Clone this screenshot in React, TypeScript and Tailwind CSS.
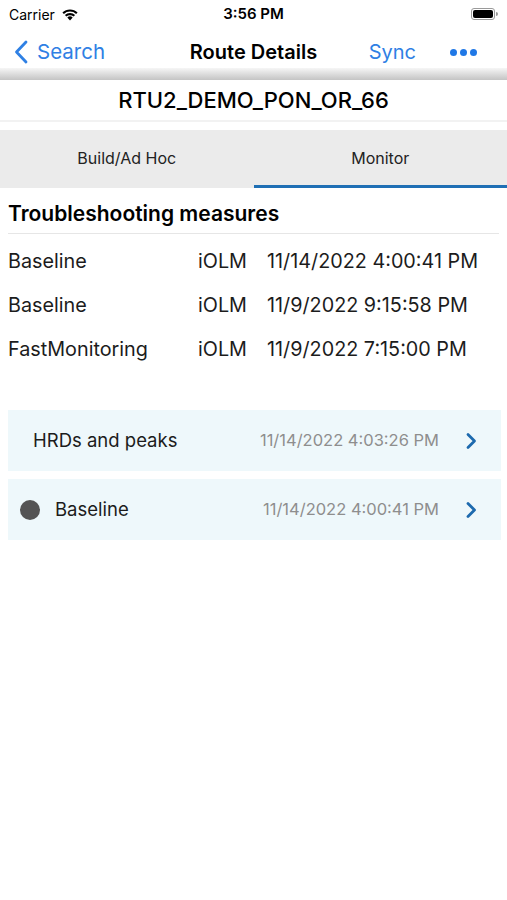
const measures = [
  { name: "Baseline", kind: "iOLM", date: "11/14/2022 4:00:41 PM" },
  { name: "Baseline", kind: "iOLM", date: "11/9/2022 9:15:58 PM" },
  { name: "FastMonitoring", kind: "iOLM", date: "11/9/2022 7:15:00 PM" },
];

const font = { fontFamily: "Inter, 'Liberation Sans', sans-serif" };

const StatusBar = () => (
  <div className="h-[28px] flex items-center justify-between px-[9px] text-black">
    <div className="flex items-center gap-[6px] w-[120px]">
      <span className="text-[14px]">Carrier</span>
      <svg width="18" height="13" viewBox="0 0 18 13">
        <path d="M9 12.5 L6.3 9.6 A3.8 3.8 0 0 1 11.7 9.6 Z" fill="#000" />
        <path d="M3.9 7.1 A7.3 7.3 0 0 1 14.1 7.1 L12.6 8.6 A5.2 5.2 0 0 0 5.4 8.6 Z" fill="#000" />
        <path d="M1.4 4.6 A10.8 10.8 0 0 1 16.6 4.6 L15.1 6.1 A8.7 8.7 0 0 0 2.9 6.1 Z" fill="#000" />
      </svg>
    </div>
    <span className="text-[15px] font-semibold">3:56 PM</span>
    <div className="w-[120px] flex justify-end">
      <div className="flex items-center">
        <div className="w-[24px] h-[12px] rounded-[3px] border border-[#9a9a9a] p-[1px]">
          <div className="w-full h-full rounded-[2px] bg-black" />
        </div>
        <div className="w-[2px] h-[4px] rounded-r-sm bg-[#9a9a9a] ml-[1px]" />
      </div>
    </div>
  </div>
);

const NavBar = () => (
  <div className="h-[40px] pt-[8px] flex items-center px-[14px]">
    <div className="flex items-center gap-[9px] w-[150px] text-[#2f80e4]">
      <svg width="14" height="24" viewBox="0 0 14 24">
        <path d="M12 2 L2.5 12 L12 22" fill="none" stroke="#2f80e4" strokeWidth="2.8" strokeLinecap="round" strokeLinejoin="round" />
      </svg>
      <span className="text-[20.5px]">Search</span>
    </div>
    <div className="flex-1 text-center text-[20px] font-semibold text-black">Route Details</div>
    <div className="w-[150px] flex items-center justify-end gap-[34px] pr-[16px]">
      <span className="text-[20px] text-[#2f80e4]">Sync</span>
      <div className="flex gap-[3px]">
        <span className="w-[7px] h-[7px] rounded-full bg-[#1f78e6]" />
        <span className="w-[7px] h-[7px] rounded-full bg-[#1f78e6]" />
        <span className="w-[7px] h-[7px] rounded-full bg-[#1f78e6]" />
      </div>
    </div>
  </div>
);

const EntryCard = ({ label, date, dot }: { label: string; date: string; dot?: boolean }) => (
  <div className="h-[61px] bg-[#eef8fb] flex items-center pl-[12px] pr-[24px]">
    {dot ? (
      <div className="w-[20px] h-[20px] rounded-full bg-[#545454] mr-[15px]" />
    ) : (
      <div className="w-[13px]" />
    )}
    <span className="flex-1 text-[18.5px] text-[#1c1c1c]">{label}</span>
    <span className="text-[16.5px] text-[#8e8e8e] mr-[26px]">{date}</span>
    <svg width="12" height="18" viewBox="0 0 12 18">
      <path d="M3 2.5 L9.5 9 L3 15.5" fill="none" stroke="#1d6aae" strokeWidth="2.8" strokeLinecap="round" strokeLinejoin="round" />
    </svg>
  </div>
);

export default function App() {
  return (
    <div className="w-[507px] h-[900px] bg-white overflow-hidden" style={font}>
      <StatusBar />
      <NavBar />
      <div className="h-[12px] bg-gradient-to-b from-[#f6f6f6] to-[#c4c4c4]" />
      <div className="h-[42px] flex items-center justify-center text-[22px] font-medium text-black border-b-2 border-[#f2f2f2]">
        RTU2_DEMO_PON_OR_66
      </div>
      <div className="h-[8px]" />
      <div className="h-[58px] bg-[#ebebeb] flex">
        <div className="flex-1 flex items-center justify-center text-[16px] text-[#222] pb-[2px]">Build/Ad Hoc</div>
        <div className="flex-1 flex items-center justify-center text-[16px] text-[#222] border-b-[3px] border-[#1f6fb4] pt-[1px]">
          Monitor
        </div>
      </div>
      <div className="px-[8px]">
        <div className="h-[46px] flex items-center text-[21px] font-semibold text-black border-b border-[#e6e6e6] pt-[7px]">
          Troubleshooting measures
        </div>
        <div className="flex flex-col pt-[6px]">
          {measures.map((m, i) => (
            <div key={i} className="h-[44px] flex items-center text-[19.8px] text-[#1c1c1c]">
              <span className="w-[190px]">{m.name}</span>
              <span className="w-[69px]">{m.kind}</span>
              <span>{m.date}</span>
            </div>
          ))}
        </div>
        <div className="mt-[38px] -mr-[2px] flex flex-col gap-[8px]">
          <EntryCard label="HRDs and peaks" date="11/14/2022 4:03:26 PM" />
          <EntryCard label="Baseline" date="11/14/2022 4:00:41 PM" dot />
        </div>
      </div>
    </div>
  );
}
